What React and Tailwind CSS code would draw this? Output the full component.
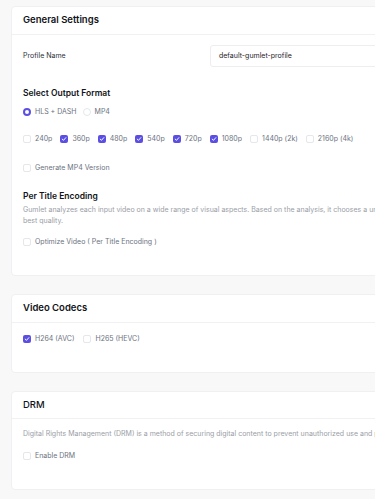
import React from "react";

const Check = ({ checked }) =>
  checked ? (
    <span className="flex h-[8px] w-[8px] shrink-0 items-center justify-center rounded-[2px] bg-[#5b4fe3]">
      <svg viewBox="0 0 10 10" className="h-[6px] w-[6px]">
        <path d="M2 5.2 L4.2 7.2 L8 2.8" fill="none" stroke="white" strokeWidth="1.6" strokeLinecap="round" strokeLinejoin="round" />
      </svg>
    </span>
  ) : (
    <span className="h-[8px] w-[8px] shrink-0 rounded-[2px] border border-[#e6e7ea] bg-white" />
  );

const CheckItem = ({ checked, label }) => (
  <div className="flex items-center gap-[4px]">
    <Check checked={checked} />
    <span className="text-[7px] leading-[12px] text-[#6b7280] whitespace-nowrap">{label}</span>
  </div>
);

const Card = ({ title, titleClass = "font-semibold", headerClass = "h-[28px]", children, bodyClass }) => (
  <div className="w-[720px] rounded-[4px] border border-[#f0f0f2] bg-white">
    <div className={`flex items-center border-b border-[#f1f1f3] px-[11px] ${headerClass}`}>
      <span className={`text-[9.5px] text-[#111318] ${titleClass}`}>{title}</span>
    </div>
    <div className={bodyClass}>{children}</div>
  </div>
);

export default function App() {
  return (
    <div className="h-[499px] w-[375px] overflow-hidden bg-[#f8f8f9]" style={{ fontFamily: "Inter, 'Noto Sans', sans-serif" }}>
      <div className="flex w-[760px] flex-col gap-[18px] pl-[11px] pt-[6px]">
        <Card title="General Settings" bodyClass="px-[11px] pt-[10px] pb-[27px]">
          <div className="flex items-center">
            <span className="w-[187px] text-[7px] text-[#2d3038]">Profile Name</span>
            <div className="flex h-[22px] w-[300px] items-center rounded-[3px] border border-[#eeeef0] pl-[8px] text-[7px] text-[#1f2128]">
              default-gumlet-profile
            </div>
          </div>
          <div className="mt-[20px] text-[8.5px] font-semibold leading-[12px] text-[#111318]">Select Output Format</div>
          <div className="mt-[7px] flex items-center gap-[6px]">
            <div className="flex items-center gap-[4px]">
              <span className="h-[8px] w-[8px] rounded-full border-[2.5px] border-[#5b4fe3] bg-white" />
              <span className="text-[7px] leading-[12px] text-[#6b7280]">HLS + DASH</span>
            </div>
            <div className="flex items-center gap-[4px]">
              <span className="h-[8px] w-[8px] rounded-full border border-[#e6e7ea] bg-white" />
              <span className="text-[7px] leading-[12px] text-[#6b7280]">MP4</span>
            </div>
          </div>
          <div className="mt-[15px] flex items-center gap-[8px]">
            <CheckItem label="240p" />
            <CheckItem checked label="360p" />
            <CheckItem checked label="480p" />
            <CheckItem checked label="540p" />
            <CheckItem checked label="720p" />
            <CheckItem checked label="1080p" />
            <CheckItem label="1440p (2k)" />
            <CheckItem label="2160p (4k)" />
          </div>
          <div className="mt-[17px]">
            <CheckItem label="Generate MP4 Version" />
          </div>
          <div className="mt-[16px] text-[8.5px] font-semibold leading-[12px] text-[#111318]">Per Title Encoding</div>
          <div className="mt-[3px] text-[7px] leading-[10.5px] text-[#9a9ea6] whitespace-nowrap">
            Gumlet analyzes each input video on a wide range of visual aspects. Based on the analysis, it chooses a unique encoding ladder for each video to deliver the
            <br />
            best quality.
          </div>
          <div className="mt-[10px]">
            <CheckItem label="Optimize Video ( Per Title Encoding )" />
          </div>
        </Card>

        <Card title="Video Codecs" bodyClass="px-[11px] pt-[10px] pb-[27px]">
          <div className="flex items-center gap-[9px]">
            <CheckItem checked label="H264 (AVC)" />
            <CheckItem label="H265 (HEVC)" />
          </div>
        </Card>

        <Card title="DRM" titleClass="font-medium" headerClass="h-[27px]" bodyClass="px-[11px] pt-[10px] pb-[27px]">
          <div className="text-[7px] leading-[10px] text-[#9a9ea6] whitespace-nowrap">
            Digital Rights Management (DRM) is a method of securing digital content to prevent unauthorized use and piracy of your videos.
          </div>
          <div className="mt-[11px]">
            <CheckItem label="Enable DRM" />
          </div>
        </Card>
      </div>
    </div>
  );
}
